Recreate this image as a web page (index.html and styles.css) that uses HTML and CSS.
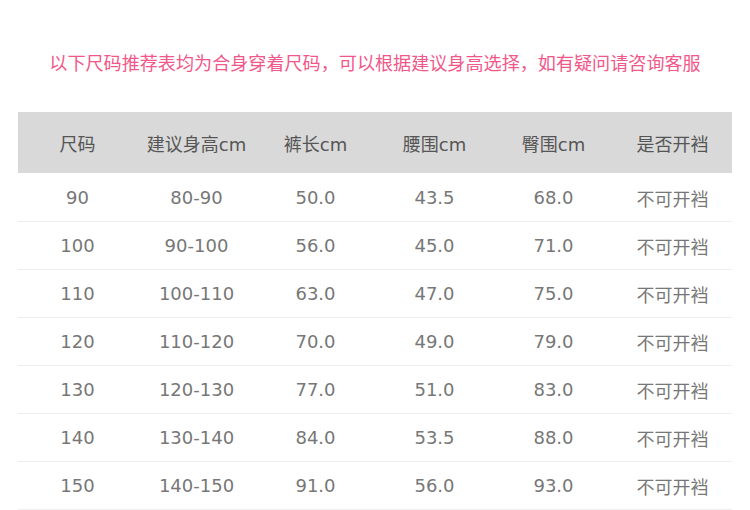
FILE: index.html
```html
<!DOCTYPE html>
<html>
<head>
<meta charset="utf-8">
<link rel="stylesheet" href="styles.css">
</head>
<body>
<div class="page">
  <p class="note">以下尺码推荐表均为合身穿着尺码，可以根据建议身高选择，如有疑问请咨询客服</p>
  <table class="size-table">
    <thead>
      <tr><th>尺码</th><th>建议身高cm</th><th>裤长cm</th><th>腰围cm</th><th>臀围cm</th><th>是否开裆</th></tr>
    </thead>
    <tbody>
      <tr><td>90</td><td>80-90</td><td>50.0</td><td>43.5</td><td>68.0</td><td>不可开裆</td></tr>
      <tr><td>100</td><td>90-100</td><td>56.0</td><td>45.0</td><td>71.0</td><td>不可开裆</td></tr>
      <tr><td>110</td><td>100-110</td><td>63.0</td><td>47.0</td><td>75.0</td><td>不可开裆</td></tr>
      <tr><td>120</td><td>110-120</td><td>70.0</td><td>49.0</td><td>79.0</td><td>不可开裆</td></tr>
      <tr><td>130</td><td>120-130</td><td>77.0</td><td>51.0</td><td>83.0</td><td>不可开裆</td></tr>
      <tr><td>140</td><td>130-140</td><td>84.0</td><td>53.5</td><td>88.0</td><td>不可开裆</td></tr>
      <tr><td>150</td><td>140-150</td><td>91.0</td><td>56.0</td><td>93.0</td><td>不可开裆</td></tr>
    </tbody>
  </table>
</div>
</body>
</html>
```
FILE: styles.css
```css
html, body {
  margin: 0;
  padding: 0;
  background: #fff;
}
body {
  font-family: "DejaVu Sans", "Noto Sans CJK SC", sans-serif;
}
.page {
  width: 750px;
  padding: 0 18px;
  box-sizing: border-box;
}
.note {
  margin: 0;
  padding-top: 48px;
  height: 63px;
  box-sizing: border-box;
  line-height: 28px;
  text-align: center;
  color: #f2578a;
  font-family: "Noto Sans CJK SC", sans-serif;
  font-size: 18.1px;
  margin-bottom: 49px;
  white-space: nowrap;
}
.size-table {
  width: 714px;
  border-collapse: collapse;
  table-layout: fixed;
}
.size-table th {
  background: #d9d9d9;
  height: 61px;
  padding: 0;
  font-weight: normal;
  font-size: 18px;
  color: #555;
  border-bottom: 1px solid #fff;
}
.size-table td {
  height: 47px;
  padding: 0;
  text-align: center;
  font-size: 18px;
  color: #777;
  border-bottom: 1px solid #eee;
}
```
